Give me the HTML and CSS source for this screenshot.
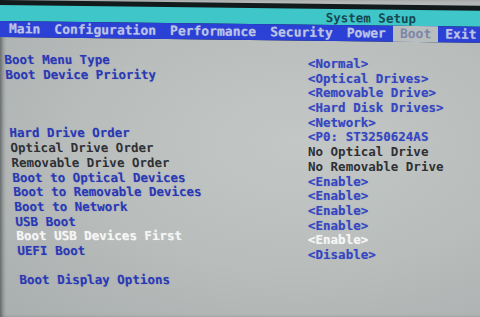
FILE: index.html
```html
<!DOCTYPE html>
<html lang="en">
<head>
    <meta charset="UTF-8">
    <meta name="viewport" content="width=device-width, initial-scale=1.0">
    <title>System Setup</title>
    <link rel="stylesheet" href="styles.css">
</head>
<body>
    <div class="screen">
        <div class="header">
            <div class="title-bar">
                <span class="title">System Setup</span>
            </div>
            <div class="tabs">
                <span class="tab">Main</span>
                <span class="tab">Configuration</span>
                <span class="tab">Performance</span>
                <span class="tab">Security</span>
                <span class="tab">Power</span>
                <span class="tab active">Boot</span>
                <span class="tab">Exit</span>
            </div>
        </div>

        <div class="content">
            <div class="labels">
                <div class="row">Boot Menu Type</div>
                <div class="row">Boot Device Priority</div>
                <div class="row"></div>
                <div class="row"></div>
                <div class="row"></div>
                <div class="row">Hard Drive Order</div>
                <div class="row dim">Optical Drive Order</div>
                <div class="row dim">Removable Drive Order</div>
                <div class="row">Boot to Optical Devices</div>
                <div class="row">Boot to Removable Devices</div>
                <div class="row">Boot to Network</div>
                <div class="row">USB Boot</div>
                <div class="row selected">Boot USB Devices First</div>
                <div class="row">UEFI Boot</div>
                <div class="row"></div>
                <div class="row">Boot Display Options</div>
            </div>
            <div class="values">
                <div class="row">&lt;Normal&gt;</div>
                <div class="row">&lt;Optical Drives&gt;</div>
                <div class="row">&lt;Removable Drive&gt;</div>
                <div class="row">&lt;Hard Disk Drives&gt;</div>
                <div class="row">&lt;Network&gt;</div>
                <div class="row">&lt;P0: ST3250624AS</div>
                <div class="row dim">No Optical Drive</div>
                <div class="row dim">No Removable Drive</div>
                <div class="row">&lt;Enable&gt;</div>
                <div class="row">&lt;Enable&gt;</div>
                <div class="row">&lt;Enable&gt;</div>
                <div class="row">&lt;Enable&gt;</div>
                <div class="row selected">&lt;Enable&gt;</div>
                <div class="row">&lt;Disable&gt;</div>
            </div>
        </div>
    </div>
</body>
</html>
```

FILE: styles.css
```css
html, body {
    margin: 0;
    padding: 0;
    background-color: #121a1c;
}
.screen {
    width: 480px;
    height: 317px;
    overflow: hidden;
    font-family: "DejaVu Sans Mono", "Liberation Mono", monospace;
    font-weight: bold;
    background: radial-gradient(ellipse at 62% 45%, #c3c7c5 0%, #b9bdbc 50%, #a9aeae 100%);
    box-shadow: inset 4px 0 4px -2px rgba(20, 25, 28, 0.55);
}
.header {
    padding-top: 5px;
    background-color: #121a1c;
    transform: skewY(0.7deg);
    transform-origin: left top;
}
.title-bar {
    height: 16px;
    background-color: #3ec6c9;
    display: flex;
    justify-content: flex-end;
    padding-right: 64px;
}
.title {
    color: #164850;
    font-size: 12.5px;
    line-height: 18px;
}
.tabs {
    display: flex;
    height: 16px;
    padding-left: 2px;
    background-color: #2b41d6;
    font-size: 13px;
    line-height: 16px;
}
.tab {
    padding: 0 7px;
    color: #bcc4e4;
    text-shadow: 0 0 1px rgba(200, 210, 240, 0.5);
}
.tab.active {
    background-color: #b8bdbe;
    color: #7d86a8;
    text-shadow: none;
}
.content {
    display: flex;
    padding-top: 16px;
    font-size: 12.5px;
    line-height: 14.7px;
    text-shadow: 0 0 1px rgba(40, 60, 180, 0.35);
}
.labels {
    width: 304px;
    padding-left: 4px;
    color: #2a38b4;
    transform: skewX(3.9deg);
    transform-origin: left top;
}
.values {
    padding-top: 4px;
    color: #3546c2;
}
.row {
    height: 14.7px;
    white-space: nowrap;
}
.row.dim {
    color: #2e3034;
    text-shadow: none;
}
.row.selected {
    color: #f4f5f4;
    text-shadow: 0 0 1px rgba(255, 255, 255, 0.6);
}
```
